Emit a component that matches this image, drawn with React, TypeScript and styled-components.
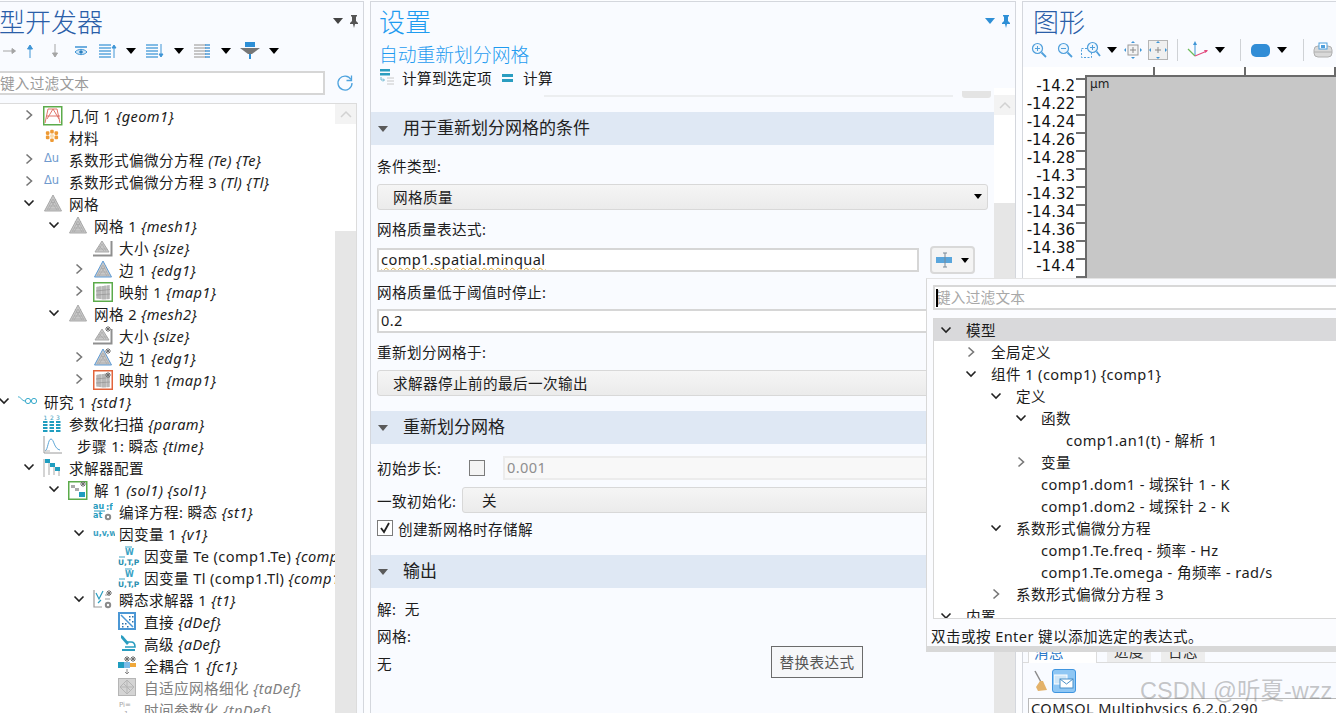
import React from "react";
import styled, { createGlobalStyle } from "styled-components";

const Global = createGlobalStyle`
  html, body { margin: 0; padding: 0; background: #fbfcff; overflow: hidden; }
  body { font-family: "Noto Sans", "Noto Sans CJK SC", sans-serif; font-size: 14.6px; letter-spacing: .4px; color: #1c1c1c; }
  * { box-sizing: border-box; }
`;

const PANEL = "#f9fbff";
const BORDER = "#d4d7dd";
const CJK = `"Noto Sans CJK SC", "Noto Sans", sans-serif`;

const Page = styled.div`
  position: relative; width: 1336px; height: 713px; overflow: hidden;
  display: flex; gap: 6px; padding-top: 1px; background: #fcfdff;
`;
const Panel = styled.section<{ $width: number; $offset?: number }>`
  flex: none; width: ${p => p.$width}px; height: 713px; margin-left: ${p => p.$offset ?? 0}px;
  background: ${PANEL}; border: 1px solid ${BORDER}; border-bottom: none;
  display: flex; flex-direction: column; overflow: hidden;
`;
const TitleRow = styled.div<{ $inset: number }>`
  height: 37px; flex: none; display: flex; align-items: center; justify-content: space-between;
  padding: 0 4px 0 ${p => p.$inset}px;
`;
const Title = styled.h1<{ $color: string }>`
  margin: 0; font: 300 26px/36px ${CJK}; letter-spacing: 0; color: ${p => p.$color}; white-space: nowrap;
`;
const Pins = styled.div`display: flex; align-items: center; gap: 6px;`;
const Toolbar = styled.div<{ $inset: number; $mt?: number }>`
  flex: none; height: 22px; margin-top: ${p => p.$mt ?? 0}px; display: flex; align-items: center; padding-left: ${p => p.$inset}px;
`;
const ToolSlot = styled.span<{ $w: number }>`
  flex: none; width: ${p => p.$w}px; display: flex; align-items: center; justify-content: center;
`;
const ToolSep = styled.span`flex: none; width: 1px; height: 22px; background: #cfd2d6; margin: 0 9px;`;

/* left panel */
const FilterRow = styled.div`flex: none; display: flex; align-items: center; margin-top: 9px; height: 24px;`;
const FilterInput = styled.div<{ $width: number }>`
  width: ${p => p.$width}px; height: 24px; background: #fff; border: 2px solid #d6d6d6;
  font: 14.67px/20px ${CJK}; letter-spacing: .2px; color: #9a9a9a; padding-left: 27px; white-space: nowrap; overflow: hidden;
`;
const Refresh = styled.span`margin-left: 11px; display: flex;`;
const TreeBox = styled.div`
  flex: none; height: 612px; margin: 8px 7px 0 0; width: 386px; background: #fff; border: 1px solid #dcdcdc; border-left: none;
  display: flex; overflow: hidden;
`;
const TreeList = styled.div`flex: 1; min-width: 0; overflow: hidden;`;
const Row = styled.div<{ $level: number; $muted?: boolean }>`
  height: 22px; display: flex; align-items: center; white-space: nowrap;
  padding-left: ${p => 26 + p.$level * 25}px; color: ${p => (p.$muted ? "#7f7f7f" : "#1c1c1c")};
`;
const Chev = styled.span`flex: none; width: 14px; height: 14px; display: flex; align-items: center; justify-content: center;`;
const IconSlot = styled.span`flex: none; width: 18px; height: 18px; margin: 0 8px 0 7px; display: flex; svg { flex: none; }`;
const Label = styled.span<{ $shift?: number }>`margin-left: ${p => p.$shift ?? 0}px;`;
const Meta = styled.em`font-style: italic;`;
const ScrollBar = styled.div<{ $width: number; $top: number }>`
  flex: none; width: ${p => p.$width}px; display: flex; flex-direction: column; background: #fff;
  &::after { content: ""; flex: 1; margin-top: ${p => p.$top}px; background: #e6e6e6; }
`;
const ScrollUp = styled.div`height: 20px; flex: none; background: #f3f3f3; display: flex; align-items: center; justify-content: center;`;

/* settings panel */
const SubTitle = styled.div`flex: none; height: 27px; padding-left: 8px; font: 300 18.8px/27px ${CJK}; letter-spacing: 0; color: #1f9bf0; margin-top: 1px;`;
const ActionRow = styled.div`flex: none; height: 21px; display: flex; align-items: center; padding-left: 9px;`;
const ActionText = styled.span`margin: 0 10px 0 7px;`;
const Body = styled.div`flex: 1; min-height: 0; display: flex; margin-top: 0;`;
const Form = styled.div`flex: 1; min-width: 0; display: flex; flex-direction: column; overflow: hidden; padding-top: 3px;`;
const SettingsBar = styled(ScrollBar)`padding-top: 7px;`;
const Clipped = styled.div`flex: none; height: 7px; display: flex; align-items: flex-end; padding-left: 173px;`;
const ClippedLine = styled.div`width: 409px; height: 2px; margin-bottom: 1px; background: #eceef0;`;
const ClippedBtn = styled.div`width: 29px; height: 7px; margin-left: 9px; background: #e4e4e4; border-radius: 0 0 3px 3px;`;
const Section = styled.div<{ $mt: number }>`
  flex: none; height: 33px; margin-top: ${p => p.$mt}px; background: #dfe8f4; display: flex; align-items: center;
  padding: 0 0 3px 7px; font: 17px/24px ${CJK}; letter-spacing: 0; color: #222; gap: 15px;
`;
const Caret = styled.span<{ $c?: string; $s?: number }>`
  flex: none; display: inline-block; width: 0; height: 0;
  border-left: ${p => p.$s ?? 5}px solid transparent; border-right: ${p => p.$s ?? 5}px solid transparent;
  border-top: ${p => (p.$s ?? 5) + 1}px solid ${p => p.$c ?? "#000"};
`;
const SectionCaret = styled(Caret)`margin-top: 3px;`;
const FieldLabel = styled.div<{ $mt: number }>`
  flex: none; height: 20px; margin: ${p => p.$mt}px 0 0 6px; line-height: 20px; white-space: nowrap;
`;
const Select = styled.div<{ $mt?: number; $grow?: boolean; $pad?: number }>`
  flex: ${p => (p.$grow ? "1" : "none")}; height: 26px; margin: ${p => p.$mt ?? 0}px 6px 0 ${p => (p.$grow ? 0 : 6)}px; display: flex; align-items: center; justify-content: space-between;
  padding: 0 5px 1px ${p => p.$pad ?? 15}px; border: 1px solid #d8d8d8; border-radius: 3px; background: linear-gradient(#f5f5f5, #ebebeb);
`;
const InputRow = styled.div<{ $mt: number }>`flex: none; display: flex; align-items: center; margin: ${p => p.$mt}px 19px 0 6px; gap: 11px;`;
const TextField = styled.div<{ $muted?: boolean }>`
  flex: 1; height: 24px; background: ${p => (p.$muted ? "#f8f8f8" : "#fff")}; border: 2px solid ${p => (p.$muted ? "#ececec" : "#d6d6d6")};
  padding-left: 2px; line-height: 19px; color: ${p => (p.$muted ? "#8f8f8f" : "#1c1c1c")}; white-space: nowrap; overflow: hidden;
`;
const MutedField = styled(TextField)`margin: 0 7px 0 18px;`;
const Wavy = styled.span`
  text-decoration: underline wavy #e0a92e; text-decoration-thickness: 1.2px; text-decoration-skip-ink: none; text-underline-offset: 2px;
`;
const ExprBtn = styled.div`
  flex: none; width: 45px; height: 28px; margin: -2px 0; border: 2px solid #d9d9d9; border-radius: 4px; background: #f4f4f4;
  display: flex; align-items: center; justify-content: center; gap: 7px;
`;
const WideField = styled(TextField)`flex: none; height: 24px; margin: 7px 7px 0 6px; `;
const InlineRow = styled.div<{ $mt: number; $h: number }>`
  flex: none; height: ${p => p.$h}px; margin: ${p => p.$mt}px 0 0 6px; display: flex; align-items: center; white-space: nowrap;
`;
const InlineLabel = styled.span<{ $w: number }>`flex: none; width: ${p => p.$w}px;`;
const Box = styled.span<{ $checked?: boolean }>`
  flex: none; width: 16px; height: 16px; border: 1px solid #7b7b7b; background: ${p => (p.$checked ? "#fff" : "#f4f4f4")};
  display: flex; align-items: center; justify-content: center;
`;
const Tip = styled.div`
  position: absolute; left: 771px; top: 646px; width: 92px; height: 32px; border: 1px solid #6b6b6b; background: #f6f7f9;
  color: #555; display: flex; align-items: center; justify-content: center; padding-bottom: 2px;
`;

/* graphics */
const GraphicsCol = styled.div`flex: none; width: 314px; height: 713px; display: flex; flex-direction: column;`;
const GraphicsPanel = styled.section`
  flex: none; height: 277px; background: #fff; border: 1px solid ${BORDER}; border-right: none; border-bottom: none;
  display: flex; flex-direction: column; overflow: hidden;
`;
const GraphicsHead = styled.div`flex: none; height: 65px; background: ${PANEL}; display: flex; flex-direction: column;`;
const Plot = styled.div`flex: 1; min-height: 0; display: flex; padding-top: 8px;`;
const Axis = styled.div`flex: none; width: 62px; display: flex; flex-direction: column; margin-top: 3px;`;
const AxisTick = styled.div`
  flex: none; height: 18px; display: flex; justify-content: flex-end; align-items: flex-start; font: 15px/18px "DejaVu Sans", sans-serif; letter-spacing: 0; color: #111; padding-right: 10px;
  position: relative;
  &::after { content: ""; position: absolute; right: 0; top: 0; width: 9px; height: 2px; background: #6e6e6e; }
  span { margin-top: -1px; }
`;
const Canvas = styled.div`
  flex: 1; background: #c7c7c7; border-left: 2px solid #6a6a6a; border-top: 2px solid #6a6a6a; position: relative;
  font: 12px/14px "DejaVu Sans", sans-serif; letter-spacing: 0; color: #222; padding: 0 3px;
`;
const TopTick = styled.span<{ $x: number }>`position: absolute; top: -10px; left: ${p => p.$x}px; width: 2px; height: 8px; background: #6a6a6a;`;
const Lower = styled.section`
  flex: 1; min-height: 0; margin-top: 6px; background: ${PANEL}; border-left: 1px solid ${BORDER}; display: flex; flex-direction: column; overflow: hidden;
`;
const Tabs = styled.div`flex: none; margin-top: auto; height: 24px; display: flex; padding-left: 5px; gap: 10px; border-bottom: 1px solid #dcdcdc;`;
const Tab = styled.div<{ $active?: boolean; $w: number }>`
  width: ${p => p.$w}px; height: ${p => (p.$active ? 24 : 23)}px; display: flex; align-items: center; justify-content: ${p => (p.$active ? "flex-start" : "center")}; padding-left: ${p => (p.$active ? 5 : 0)}px;
  background: ${p => (p.$active ? "#fff" : "#ededed")}; border: ${p => (p.$active ? "1px solid #dcdcdc" : "none")}; border-bottom: none;
  color: ${p => (p.$active ? "#2c79c9" : "#333")};
`;
const LogTools = styled.div`flex: none; height: 35px; display: flex; align-items: center; padding-left: 9px; gap: 4px;`;
const MailBtn = styled.span`
  width: 24px; height: 24px; background: #8fc7f4; border: 1px solid #3f95e0; border-radius: 3px; display: flex; align-items: center; justify-content: center;
`;
const LogBox = styled.div`
  flex: none; height: 16px; margin-left: 5px; background: #fff; border: 1px solid #b9b9b9; border-right: none; border-bottom: none; padding-left: 2px; line-height: 19px; white-space: nowrap; overflow: hidden;
`;
const Watermark = styled.div`
  position: absolute; left: 1140px; top: 677px; font: 23.5px/28px "Liberation Sans", "Noto Sans CJK SC", sans-serif; letter-spacing: 0; color: rgba(120, 120, 120, 0.42); white-space: nowrap;
`;

/* popup */
const Popup = styled.div`
  position: absolute; left: 926px; top: 278px; width: 420px; height: 374px; background: #fbfcff;
  border-left: 1px solid #d8d8d8; border-top: 1px solid #e4e4e4; border-bottom: 6px solid #d8d8d8;
  display: flex; flex-direction: column; padding: 6px 0 0 6px;
`;
const PopupFilter = styled.div`
  flex: none; height: 25px; background: #fff; border: 2px solid #d8d8d8; border-right: none; position: relative;
  font: 14.67px/20px ${CJK}; letter-spacing: .2px; color: #a8a8a8; padding-left: 1px; overflow: hidden; white-space: nowrap;
`;
const Cursor = styled.span`position: absolute; left: 1px; top: 2px; width: 2px; height: 18px; background: #000;`;
const PopupTree = styled.div`
  flex: none; height: 301px; margin-top: 8px; background: #fff; border: 1px solid #d8d8d8; border-right: none; overflow: hidden; 
`;
const PopupRow = styled.div<{ $level: number; $selected?: boolean }>`
  height: 22px; display: flex; align-items: center; white-space: nowrap; gap: 13px; padding-bottom: 1px;
  padding-left: ${p => 5 + p.$level * 25}px; background: ${p => (p.$selected ? "#d9d9db" : "transparent")};
`;
const PopupStatus = styled.div`flex: none; height: 28px; margin-left: -2px; display: flex; align-items: center; padding-top: 5px; white-space: nowrap;`;

/* icons */
const S: React.FC<{ w?: number; h?: number; children: React.ReactNode }> = ({ w = 18, h = 18, children }) => (
  <svg width={w} height={h} viewBox={`0 0 ${w} ${h}`} fill="none" style={{ letterSpacing: 0 }}>{children}</svg>
);
const ChevR = () => (<S w={14} h={14}><path d="M4.5 2.5 9.5 7l-5 4.5" stroke="#777" strokeWidth="1.6" /></S>);
const ChevD = () => (<S w={14} h={14}><path d="M2.5 4.5 7 9l4.5-4.5" stroke="#222" strokeWidth="1.6" /></S>);

const Tri = ({ stroke = "#a9a9a9" }: { stroke?: string }) => (
  <>
    <path d="M9 1 17.5 17H.5z" fill="#c8c8c8" stroke={stroke} />
    <path d="M9 5 3 16M9 5l6 11M6 5 13 16M12 5 5 16M5 12h8M3.500 15h11M7 8.500h4" stroke="#a4a4a4" strokeWidth=".6" />
  </>
);
const Star = ({ x = 14, y = 3 }: { x?: number; y?: number }) => (
  <g stroke="#6e6e6e" strokeWidth="1">
    <path d={`M${x - 3} ${y}h6M${x} ${y - 3}v6M${x - 2} ${y - 2}l4 4M${x + 2} ${y - 2}l-4 4`} />
  </g>
);
const Gear = ({ x = 14, y = 14 }: { x?: number; y?: number }) => (
  <g>
    <circle cx={x} cy={y} r="3.200" fill="#8a8a8a" />
    <circle cx={x} cy={y} r="1.200" fill="#fff" />
  </g>
);
const Mesh = () => <S w={20} h={18}><g transform="translate(1 0)"><Tri /></g></S>;
const SizeIcon = ({ star }: { star?: boolean }) => (
  <S w={20} h={20}>
    <path d="M9 3 16 14H2z" fill="#c8c8c8" stroke="#a9a9a9" />
    <path d="M9 6 5 13M9 6l4 7M4 11h10M6 8l5 5" stroke="#a4a4a4" strokeWidth=".6" />
    <path d="M18.500 3v14.500H0" stroke="#8f8f8f" strokeWidth="2" />
    {star && <Star x={15} y={3} />}
  </S>
);
const EdgeIcon = ({ star }: { star?: boolean }) => (<S w={20} h={18}><g transform="translate(1 0)"><Tri stroke="#5d9bd6" /></g>{star && <Star x={15} y={3} />}</S>);
const MapIcon = ({ star }: { star?: boolean }) => (
  <S w={20} h={20}>
    <rect x=".75" y=".75" width="18.500" height="18.500" stroke={star ? "#e2653c" : "#5cab4b"} strokeWidth="1.500" fill="#fff" />
    <path d="M3 5 10 4l7-1v14l-7 .5-7-1z" fill="#c9c9c9" />
    <path d="M5 4.500v12M7 4v13M10 4v13.500M12 3.500v14M15 3.200v14M3 9l14-1.500M3 13l14-1" stroke="#8d8d8d" strokeWidth=".6" />
    {star && <Star x={15} y={5} />}
  </S>
);
const GeomIcon = () => (
  <S w={20} h={20}>
    <rect x=".75" y=".75" width="18" height="18" fill="#fff" stroke="#5cab4b" strokeWidth="1.500" />
    <path d="M5 3h9M5 3l-3 14M14 3l3 14M10 3 4 13M10 3l6 10M3 10h14" stroke="#e0756a" strokeWidth="1" />
  </S>
);
const MatIcon = () => (
  <S>
    <g transform="translate(2.500 1.500) scale(.72)">
      {[[3, 5], [9, 3], [15, 5], [3, 11], [9, 9], [15, 11], [9, 15]].map(([x, y]) => (
        <rect key={`${x}-${y}`} x={x - 2.500} y={y - 2.500} width="5" height="5" rx="1.500" fill={x === 9 && y === 9 ? "#f8d9a8" : "#ee9a34"} />
      ))}
    </g>
  </S>
);
const PdeIcon = () => (
  <S w={20} h={18}><text x="1" y="12" fontSize="11.500" fontFamily="DejaVu Sans, sans-serif" fill="#6f9ace">Δu</text></S>
);
const StudyIcon = () => (
  <S w={20} h={18}>
    <path d="M0 5c2-1 4 4 7 4" stroke="#38aacb" strokeWidth="1" />
    <circle cx="10" cy="9" r="2.600" stroke="#38aacb" /><circle cx="16" cy="9" r="2.600" stroke="#38aacb" />
  </S>
);
const ParamIcon = () => (
  <S>
    <text x="0.500" y="5.500" fontSize="6" fill="#38a0c0" fontFamily="DejaVu Sans, sans-serif">1</text>
    <text x="7" y="5.500" fontSize="6" fill="#38a0c0" fontFamily="DejaVu Sans, sans-serif">2</text>
    <text x="13" y="5.500" fontSize="6" fill="#38a0c0" fontFamily="DejaVu Sans, sans-serif">3</text>
    {[0, 6.500, 13].map(x => (
      <g key={x}>{[7, 10, 13, 16].map(y => <rect key={y} x={x} y={y} width="4.500" height="2" fill="#1f9dbf" />)}</g>
    ))}
  </S>
);
const StepIcon = () => (
  <S w={20} h={18}>
    <path d="M1 0v17h18" stroke="#9a9a9a" />
    <path d="M2 15C5 14 5 3 8 3s3 10 9 11" stroke="#5da6d6" />
    <path d="M2 15h5" stroke="#b5b5b5" />
  </S>
);
const SolverIcon = () => (
  <S w={20} h={20}>
    <path d="M1 1v18M6 3v14M11 8v9M16 12v6" stroke="#a9a9a9" />
    <rect x="2" y="1" width="5" height="4" fill="#1f9dbf" /><rect x="7" y="5" width="5" height="4" fill="#1f9dbf" /><rect x="12" y="9" width="5" height="4" fill="#1f9dbf" />
  </S>
);
const SolIcon = () => (
  <S w={20} h={20}>
    <rect x=".75" y="1.750" width="18" height="17.500" fill="#fff" stroke="#5cab4b" strokeWidth="1.500" />
    <rect x="3" y="5" width="4" height="3" fill="#a9a9a9" /><rect x="7" y="8" width="4" height="3" fill="#a9a9a9" />
    <rect x="11" y="12" width="6" height="5" fill="#1f9dbf" />
    <Star x={15} y={4} />
  </S>
);
const CompileIcon = () => (
  <S w={20} h={20}>
    <text x="0" y="7" fontSize="8" fontWeight="700" fill="#2a9dc0" fontFamily="DejaVu Sans, sans-serif">au</text>
    <path d="M1 9h11" stroke="#2a9dc0" />
    <text x="0" y="16" fontSize="8" fontWeight="700" fill="#2a9dc0" fontFamily="DejaVu Sans, sans-serif">at</text>
    <text x="13" y="8" fontSize="8" fontWeight="700" fill="#2a9dc0" fontFamily="DejaVu Sans, sans-serif">:f</text>
    <Gear x={15} y={15} />
  </S>
);
const UvwIcon = () => (
  <S w={22} h={18}><text x="0" y="12" fontSize="8" fontWeight="700" fill="#3aa2c4" fontFamily="DejaVu Sans, sans-serif">u,v,w</text></S>
);
const VarIcon = () => (
  <S w={22} h={20}>
    <path d="M7 1h7" stroke="#3aa2c4" />
    <text x="7" y="9" fontSize="8" fontWeight="700" fill="#3aa2c4" fontFamily="DejaVu Sans, sans-serif">W</text>
    <path d="M1 11h6" stroke="#3aa2c4" />
    <text x="0" y="19" fontSize="7.500" fontWeight="700" fill="#2a8fb0" fontFamily="DejaVu Sans, sans-serif">U,T,P</text>
  </S>
);
const TransientIcon = () => (
  <S w={20} h={20}>
    <path d="M1 0v17h8" stroke="#9a9a9a" strokeWidth="1.200" />
    <path d="M3 3l3 6 4-8M5 13l3-3" stroke="#2a9dc0" strokeWidth="1.200" />
    <path d="M12 5h5M12 9h5" stroke="#9a9a9a" />
    <Star x={16} y={3} />
    <Gear x={15} y={15} />
  </S>
);
const DirectIcon = () => (
  <S>
    <rect x="1" y="1" width="16" height="16" fill="#fff" stroke="#4b97d5" strokeWidth="2" />
    <path d="M3 3l12 12" stroke="#4b97d5" strokeWidth="1.500" />
    {[[11, 4], [14, 4], [11, 7], [14, 9], [4, 11], [7, 11], [4, 14], [9, 14]].map(([x, y]) => (
      <rect key={`${x}-${y}`} x={x} y={y} width="1.500" height="1.500" fill="#2c6fa8" />
    ))}
  </S>
);
const AdvIcon = () => (
  <S>
    <path d="M3 1l2 1 6 7-2 2-6-7z" fill="#2a9dc0" />
    <path d="M9 8h4c3 0 4 2 4 5H7" stroke="#2a9dc0" strokeWidth="1.600" />
    <path d="M4 16h13" stroke="#2a9dc0" strokeWidth="2" />
  </S>
);
const FullIcon = () => (
  <S w={20} h={20}>
    <rect x="0" y="6" width="6" height="6" fill="#1f9dbf" /><rect x="6" y="6" width="6" height="6" fill="#7dbbe8" /><rect x="12" y="7" width="6" height="4" fill="#f0a83a" />
    <Star x={9} y={3} /><Star x={15} y={3} />
    <path d="M9 13v5M7 16l2 2 2-2" stroke="#8a8a8a" />
  </S>
);
const AdaptIcon = () => (
  <S>
    <rect x=".5" y=".5" width="17" height="17" fill="#d4d4d4" stroke="#b5b5b5" />
    <path d="M2 9 9 2l7 7-7 7zM2 9h14M9 2v14M5 5l8 8" stroke="#b5b5b5" />
  </S>
);
const TimeIcon = () => (
  <S><text x="1" y="7" fontSize="7" fill="#a5a5a5" fontFamily="DejaVu Sans, sans-serif">Pi=</text><text x="6" y="16" fontSize="7" fill="#a5a5a5" fontFamily="DejaVu Sans, sans-serif">1</text></S>
);

const MenuCaret = ({ c = "#444" }: { c?: string }) => (<Caret $c={c} $s={5} />);
const PinIcon = ({ c = "#555" }: { c?: string }) => (
  <S w={10} h={14}><path d="M2 1h6v1L7 3v4l2 2v1H6l-1 4-1-4H1V9l2-2V3L2 2z" fill={c} /></S>
);

const Arrow = ({ dir, c }: { dir: "r" | "u" | "d"; c: string }) => (
  <S w={14} h={16}>
    {dir === "r" && <path d="M0 8h12M9 5.500 12.500 8 9 10.500z" stroke={c} fill={c} />}
    {dir === "u" && <path d="M7 15V3M4.500 6 7 2l2.500 4z" stroke={c} fill={c} />}
    {dir === "d" && <path d="M7 1v12M4.500 10 7 14l2.500-4z" stroke={c} fill={c} />}
  </S>
);
const EyeIcon = () => (
  <S w={14} h={12}><path d="M1 2h12" stroke="#3f95d6" strokeWidth="1.500" /><path d="M1 7c3-3.500 9-3.500 12 0-3 3.500-9 3.500-12 0z" fill="#cfe6f7" stroke="#3f95d6" /><circle cx="7" cy="7" r="1.800" fill="#2a7fc0" /></S>
);
const ListIcon = ({ dir }: { dir?: "u" | "d" }) => (
  <S w={20} h={16}>
    {[2, 5, 8, 11, 14].map(y => <path key={y} d={`M1 ${y}h12`} stroke={dir ? "#5aa6dc" : "#b5b5b5"} strokeWidth="1.500" />)}
    {!dir && [2, 5, 8, 11, 14].map(y => <path key={y} d={`M12 ${y}h5`} stroke="#4c9ad6" strokeWidth="1.500" />)}
    {dir === "u" && <path d="M16 15V3M14 5l2-3 2 3z" stroke="#3f95d6" fill="#3f95d6" />}
    {dir === "d" && <path d="M16 1v12M14 11l2 3 2-3z" stroke="#3f95d6" fill="#3f95d6" />}
  </S>
);
const FunnelIcon = () => (
  <S w={20} h={18}><rect x="5" y="0" width="10" height="5" fill="#2e8fd6" /><path d="M0 6h20l-8 6H8z" fill="#777" /><rect x="9" y="12" width="2" height="5" fill="#2e8fd6" /></S>
);
const RefreshIcon = () => (
  <S w={18} h={18}><path d="M15 5.500A7 7 0 1 0 16 9" stroke="#4ea3de" strokeWidth="1.300" /><path d="M15.500 1.500v5h-5" stroke="#4ea3de" strokeWidth="1.300" /></S>
);
const Mag = ({ mark }: { mark: "+" | "-" }) => (
  <S w={16} h={16}>
    <circle cx="6.500" cy="6.500" r="5" stroke="#4f9fdc" strokeWidth="1.200" fill="#eef6fd" />
    <path d="M4 6.500h5" stroke="#4f9fdc" />
    {mark === "+" && <path d="M6.500 4v5" stroke="#4f9fdc" />}
    <path d="M10.500 10.500 15 15" stroke="#4f9fdc" strokeWidth="1.800" />
  </S>
);
const ZoomBox = () => (
  <S w={20} h={18}>
    <rect x=".5" y="7.500" width="10" height="9" stroke="#4f9fdc" strokeDasharray="2 1.500" />
    <circle cx="11.500" cy="6.500" r="5" stroke="#4f9fdc" strokeWidth="1.200" fill="#eef6fd" />
    <path d="M9 6.500h5M11.500 4v5" stroke="#4f9fdc" />
    <path d="M15.500 10.500 19 15" stroke="#4f9fdc" strokeWidth="1.800" />
  </S>
);
const Extents = ({ boxed }: { boxed?: boolean }) => (
  <S w={20} h={20}>
    {boxed && <rect x=".5" y=".5" width="19" height="19" fill="#f0f0f0" stroke="#b5b5b5" />}
    {!boxed && <rect x="5" y="5" width="10" height="10" fill="#f4f4f4" stroke="#9a9a9a" />}
    <path d="M7 10h6M10 7v6" stroke="#8a8a8a" />
    <path d="M10 1l2 2H8zM10 19l2-2H8zM1 10l2-2v4zM19 10l-2-2v4z" fill="#3f95d6" />
  </S>
);
const AxesIcon = () => (
  <S w={22} h={18}>
    <path d="M8 15V2" stroke="#3f95d6" /><path d="M8 0 6 4h4z" fill="#3f95d6" />
    <path d="M8 15 1 8" stroke="#6dbb5a" strokeWidth="1.200" /><path d="M8 15l12-5" stroke="#e24b7e" strokeWidth="1.200" /><path d="M21 9l-4 0 1.500 3z" fill="#e24b7e" />
  </S>
);
const Pill = () => (<S w={19} h={13}><rect x="0" y="0" width="19" height="13" rx="5" fill="#318dd6" /></S>);
const Camera = () => (
  <S w={20} h={16}><rect x="1" y="4" width="18" height="11" rx="4" fill="#d9d9d9" stroke="#b0b0b0" /><path d="M1 10h18" stroke="#b0b0b0" /><rect x="6" y="1" width="8" height="6" fill="#fff" stroke="#4f9fdc" /><rect x="8" y="3" width="4" height="3" fill="#4f9fdc" /></S>
);
const StackIcon = () => (
  <S w={15} h={18}>
    <rect x="0" y="0" width="10" height="2.500" fill="#2a9dc0" /><rect x="0" y="4" width="10" height="2.500" fill="#2a9dc0" />
    <path d="M1 8v3h3M3 9.500 4.500 11 3 12.500" stroke="#6db8d2" />
    <path d="M7 9h7M7 12h7M7 15h7" stroke="#c8c8c8" />
  </S>
);
const EqIcon = () => (<S w={14} h={12}><rect x="0" y="2" width="11" height="3" fill="#2a9dc0" /><rect x="0" y="7" width="11" height="3" fill="#2a9dc0" /></S>);
const Expr = () => (
  <S w={18} h={18}><rect x="0" y="6" width="16" height="6" fill="#5aa6dc" /><path d="M9 2v14M7 2h4M7 16h4" stroke="#7a8a98" /></S>
);
const Check = () => (<S w={12} h={12}><path d="M2 6l3 4 5-9" stroke="#222" strokeWidth="1.800" /></S>);
const UpChev = () => (<S w={12} h={8}><path d="M1 7l5-5 5 5" stroke="#d2d2d2" strokeWidth="1.500" /></S>);
const Broom = () => (
  <S w={16} h={22}><path d="M3 1l6 11" stroke="#8a8a8a" strokeWidth="1.500" /><path d="M8 11l3 0 4 9-9 1-2-4z" fill="#e3b26a" /></S>
);
const Mail = () => (
  <S w={20} h={16}><rect x="0" y="2" width="13" height="9" fill="#cfe6f7" stroke="#fff" /><rect x="6" y="6" width="13" height="9" fill="#fff" stroke="#4a90c8" /><path d="M6 6l6.500 5L19 6" stroke="#4a90c8" /></S>
);

type Node = {
  level: number; open?: boolean; leaf?: boolean; icon: React.ReactNode; label: string; meta?: string; muted?: boolean; shift?: number;
};
const nodes: Node[] = [
  { level: 1, icon: <GeomIcon />, label: "几何 1", meta: "{geom1}" },
  { level: 1, leaf: true, icon: <MatIcon />, label: "材料" },
  { level: 1, icon: <PdeIcon />, label: "系数形式偏微分方程", meta: "(Te) {Te}" },
  { level: 1, icon: <PdeIcon />, label: "系数形式偏微分方程 3", meta: "(Tl) {Tl}" },
  { level: 1, open: true, icon: <Mesh />, label: "网格" },
  { level: 2, open: true, icon: <Mesh />, label: "网格 1", meta: "{mesh1}" },
  { level: 3, leaf: true, icon: <SizeIcon />, label: "大小", meta: "{size}" },
  { level: 3, icon: <EdgeIcon />, label: "边 1", meta: "{edg1}" },
  { level: 3, icon: <MapIcon />, label: "映射 1", meta: "{map1}" },
  { level: 2, open: true, icon: <Mesh />, label: "网格 2", meta: "{mesh2}" },
  { level: 3, leaf: true, icon: <SizeIcon star />, label: "大小", meta: "{size}" },
  { level: 3, icon: <EdgeIcon star />, label: "边 1", meta: "{edg1}" },
  { level: 3, icon: <MapIcon star />, label: "映射 1", meta: "{map1}" },
  { level: 0, open: true, icon: <StudyIcon />, label: "研究 1", meta: "{std1}" },
  { level: 1, leaf: true, icon: <ParamIcon />, label: "参数化扫描", meta: "{param}" },
  { level: 1, leaf: true, icon: <StepIcon />, label: "步骤 1: 瞬态", meta: "{time}", shift: 8 },
  { level: 1, open: true, icon: <SolverIcon />, label: "求解器配置" },
  { level: 2, open: true, icon: <SolIcon />, label: "解 1", meta: "(sol1) {sol1}" },
  { level: 3, leaf: true, icon: <CompileIcon />, label: "编译方程: 瞬态", meta: "{st1}" },
  { level: 3, open: true, icon: <UvwIcon />, label: "因变量 1", meta: "{v1}" },
  { level: 4, leaf: true, icon: <VarIcon />, label: "因变量 Te (comp1.Te)", meta: "{comp1_Te}" },
  { level: 4, leaf: true, icon: <VarIcon />, label: "因变量 Tl (comp1.Tl)", meta: "{comp1_Tl}" },
  { level: 3, open: true, icon: <TransientIcon />, label: "瞬态求解器 1", meta: "{t1}" },
  { level: 4, leaf: true, icon: <DirectIcon />, label: "直接", meta: "{dDef}" },
  { level: 4, leaf: true, icon: <AdvIcon />, label: "高级", meta: "{aDef}" },
  { level: 4, leaf: true, icon: <FullIcon />, label: "全耦合 1", meta: "{fc1}" },
  { level: 4, leaf: true, icon: <AdaptIcon />, label: "自适应网格细化", meta: "{taDef}", muted: true },
  { level: 4, leaf: true, icon: <TimeIcon />, label: "时间参数化", meta: "{tpDef}", muted: true },
];

type PNode = { level: number; open?: boolean; leaf?: boolean; label: string; selected?: boolean };
const popupNodes: PNode[] = [
  { level: 0, open: true, label: "模型", selected: true },
  { level: 1, label: "全局定义" },
  { level: 1, open: true, label: "组件 1 (comp1) {comp1}" },
  { level: 2, open: true, label: "定义" },
  { level: 3, open: true, label: "函数" },
  { level: 4, leaf: true, label: "comp1.an1(t) - 解析 1" },
  { level: 3, label: "变量" },
  { level: 3, leaf: true, label: "comp1.dom1 - 域探针 1 - K" },
  { level: 3, leaf: true, label: "comp1.dom2 - 域探针 2 - K" },
  { level: 2, open: true, label: "系数形式偏微分方程" },
  { level: 3, leaf: true, label: "comp1.Te.freq - 频率 - Hz" },
  { level: 3, leaf: true, label: "comp1.Te.omega - 角频率 - rad/s" },
  { level: 2, label: "系数形式偏微分方程 3" },
  { level: 0, open: true, label: "内置" },
];

const ticks = ["-14.2", "-14.22", "-14.24", "-14.26", "-14.28", "-14.3", "-14.32", "-14.34", "-14.36", "-14.38", "-14.4", ""];

export default function App() {
  return (
    <Page>
      <Global />
      <Panel $width={394} $offset={-30}>
        <TitleRow $inset={2}>
          <Title $color="#2a5ea8">模型开发器</Title>
          <Pins><MenuCaret /><PinIcon /></Pins>
        </TitleRow>
        <Toolbar $inset={30} $mt={1}>
          <ToolSlot $w={18}><Arrow dir="r" c="#a5a5a5" /></ToolSlot>
          <ToolSlot $w={21}><Arrow dir="u" c="#3f95d6" /></ToolSlot>
          <ToolSlot $w={29}><Arrow dir="d" c="#a5a5a5" /></ToolSlot>
          <ToolSlot $w={24}><EyeIcon /></ToolSlot>
          <ToolSlot $w={30}><ListIcon dir="u" /></ToolSlot>
          <ToolSlot $w={16}><Caret /></ToolSlot>
          <ToolSlot $w={32}><ListIcon dir="d" /></ToolSlot>
          <ToolSlot $w={16}><Caret /></ToolSlot>
          <ToolSlot $w={31}><ListIcon /></ToolSlot>
          <ToolSlot $w={16}><Caret /></ToolSlot>
          <ToolSlot $w={32}><FunnelIcon /></ToolSlot>
          <ToolSlot $w={16}><Caret /></ToolSlot>
        </Toolbar>
        <FilterRow>
          <FilterInput $width={354}>键入过滤文本</FilterInput>
          <Refresh><RefreshIcon /></Refresh>
        </FilterRow>
        <TreeBox>
          <TreeList>
            {nodes.map((n, i) => (
              <Row key={i} $level={n.level} $muted={n.muted}>
                <Chev>{n.leaf ? null : n.open ? <ChevD /> : <ChevR />}</Chev>
                <IconSlot>{n.icon}</IconSlot>
                <Label $shift={n.shift}>
                  {n.label}{n.meta && <> <Meta>{n.meta}</Meta></>}
                </Label>
              </Row>
            ))}
          </TreeList>
          <ScrollBar $width={21} $top={107}><ScrollUp><UpChev /></ScrollUp></ScrollBar>
        </TreeBox>
      </Panel>

      <Panel $width={646}>
        <TitleRow $inset={8}>
          <Title $color="#1f9bf0">设置</Title>
          <Pins><MenuCaret c="#2e8fd6" /><PinIcon c="#2e8fd6" /></Pins>
        </TitleRow>
        <SubTitle>自动重新划分网格</SubTitle>
        <ActionRow>
          <StackIcon /><ActionText>计算到选定项</ActionText><EqIcon /><ActionText>计算</ActionText>
        </ActionRow>
        <Body>
          <Form>
            <Clipped><ClippedLine /><ClippedBtn /></Clipped>
            <Section $mt={14}><SectionCaret $c="#5a5a5a" />用于重新划分网格的条件</Section>
            <FieldLabel $mt={11}>条件类型:</FieldLabel>
            <Select $mt={8}>网格质量<Caret $s={4} /></Select>
            <FieldLabel $mt={9}>网格质量表达式:</FieldLabel>
            <InputRow $mt={9}>
              <TextField><Wavy>comp1.spatial.minqual</Wavy></TextField>
              <ExprBtn><Expr /><Caret $s={4} /></ExprBtn>
            </InputRow>
            <FieldLabel $mt={10}>网格质量低于阈值时停止:</FieldLabel>
            <WideField>0.2</WideField>
            <FieldLabel $mt={9}>重新划分网格于:</FieldLabel>
            <Select $mt={8}>求解器停止前的最后一次输出<Caret $s={4} /></Select>
            <Section $mt={15}><SectionCaret $c="#5a5a5a" />重新划分网格</Section>
            <InlineRow $mt={12} $h={23}>
              <InlineLabel $w={92}>初始步长:</InlineLabel>
              <Box />
              <MutedField $muted>0.001</MutedField>
            </InlineRow>
            <InlineRow $mt={8} $h={26}>
              <InlineLabel $w={85}>一致初始化:</InlineLabel>
              <Select $grow $pad={19}>关<Caret $s={4} /></Select>
            </InlineRow>
            <InlineRow $mt={5} $h={20}>
              <Box $checked><Check /></Box>
              <Label $shift={5}>创建新网格时存储解</Label>
            </InlineRow>
            <Section $mt={17}><SectionCaret $c="#5a5a5a" />输出</Section>
            <FieldLabel $mt={11}>解:&nbsp;&nbsp;无</FieldLabel>
            <FieldLabel $mt={7}>网格:</FieldLabel>
            <FieldLabel $mt={8}>无</FieldLabel>
          </Form>
          <SettingsBar $width={21} $top={88}><ScrollUp><UpChev /></ScrollUp></SettingsBar>
        </Body>
      </Panel>

      <GraphicsCol>
        <GraphicsPanel>
          <GraphicsHead>
            <TitleRow $inset={10}><Title $color="#2a5ea8">图形</Title></TitleRow>
            <Toolbar $inset={8}>
              <ToolSlot $w={16}><Mag mark="+" /></ToolSlot>
              <ToolSlot $w={10} />
              <ToolSlot $w={16}><Mag mark="-" /></ToolSlot>
              <ToolSlot $w={8} />
              <ToolSlot $w={20}><ZoomBox /></ToolSlot>
              <ToolSlot $w={21}><Caret /></ToolSlot>
              <ToolSlot $w={22}><Extents /></ToolSlot>
              <ToolSlot $w={4} />
              <ToolSlot $w={20}><Extents boxed /></ToolSlot>
              <ToolSep />
              <ToolSlot $w={22}><AxesIcon /></ToolSlot>
              <ToolSlot $w={22}><Caret /></ToolSlot>
              <ToolSep />
              <ToolSlot $w={20}><Pill /></ToolSlot>
              <ToolSlot $w={24}><Caret /></ToolSlot>
              <ToolSep />
              <ToolSlot $w={20}><Camera /></ToolSlot>
            </Toolbar>
          </GraphicsHead>
          <Plot>
            <Axis>
              {ticks.map((t, i) => <AxisTick key={i}><span>{t}</span></AxisTick>)}
            </Axis>
            <Canvas>
              µm
              <TopTick $x={66} /><TopTick $x={157} /><TopTick $x={247} />
            </Canvas>
          </Plot>
        </GraphicsPanel>
        <Lower>
          <Tabs>
            <Tab $active $w={69}>消息</Tab>
            <Tab $w={44}>进度</Tab>
            <Tab $w={44}>日志</Tab>
          </Tabs>
          <LogTools><Broom /><MailBtn><Mail /></MailBtn></LogTools>
          <LogBox>COMSOL Multiphysics 6.2.0.290</LogBox>
        </Lower>
      </GraphicsCol>

      <Tip>替换表达式</Tip>
      <Watermark>CSDN @听夏-wzz</Watermark>

      <Popup>
        <PopupFilter><Cursor />键入过滤文本</PopupFilter>
        <PopupTree>
          {popupNodes.map((n, i) => (
            <PopupRow key={i} $level={n.level} $selected={n.selected}>
              <Chev>{n.leaf ? null : n.open ? <ChevD /> : <ChevR />}</Chev>
              <span>{n.label}</span>
            </PopupRow>
          ))}
        </PopupTree>
        <PopupStatus>双击或按 Enter 键以添加选定的表达式。</PopupStatus>
      </Popup>
    </Page>
  );
}
